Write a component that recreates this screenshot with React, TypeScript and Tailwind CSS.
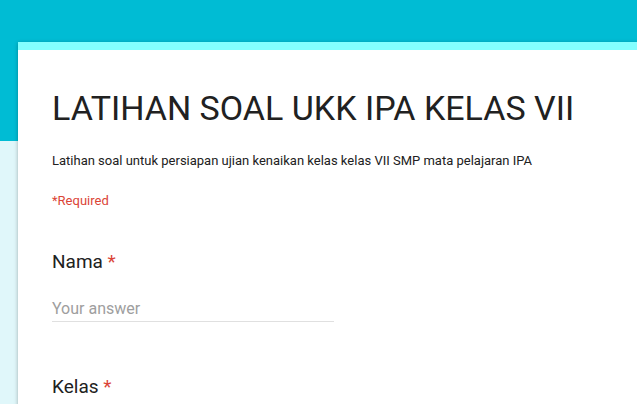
export default function App() {
  return (
    <div className="h-[404px] w-[637px] overflow-hidden bg-[linear-gradient(#00bcd4_0,#00bcd4_141px,#e0f7fa_141px)] pl-[18px] pt-[42px] font-['Roboto','Liberation_Sans',sans-serif]">
      <div className="w-[660px] bg-white pb-[60px] shadow-[0_1px_4px_rgba(0,0,0,0.3)]">
        <div className="h-[8px] bg-[#84ffff]" />
        <div className="pl-[34px] pt-[38px]">
          <h1 className="text-[34px] leading-[40px] text-[#212121]">LATIHAN SOAL UKK IPA KELAS VII</h1>
          <p className="mt-[24px] text-[13px] leading-[18px] text-[#212121]">
            Latihan soal untuk persiapan ujian kenaikan kelas kelas VII SMP mata pelajaran IPA
          </p>
          <p className="mt-[22px] text-[13px] leading-[18px] text-[#db4437]">*Required</p>

          <div className="mt-[40px]">
            <div className="text-[19px] leading-[24px] text-[#212121]">
              Nama <span className="text-[#db4437]">*</span>
            </div>
            <div className="mt-[25px] w-[282px] border-b border-[#e0e0e0] pb-[2px] text-[16px] leading-[20px] text-[#9e9e9e]">
              Your answer
            </div>
          </div>

          <div className="mt-[53px]">
            <div className="text-[19px] leading-[24px] text-[#212121]">
              Kelas <span className="text-[#db4437]">*</span>
            </div>
          </div>
        </div>
      </div>
    </div>
  )
}
